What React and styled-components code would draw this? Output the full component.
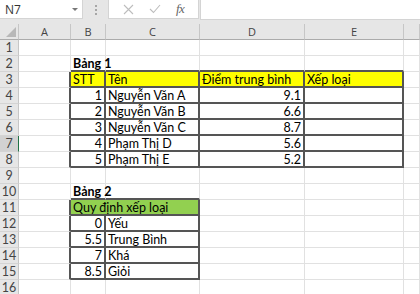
import React from 'react';
import styled, { createGlobalStyle } from 'styled-components';

const GlobalStyle = createGlobalStyle`
  html, body {
    margin: 0;
    padding: 0;
    background: #ffffff;
    overflow: hidden;
  }
  body {
    font-family: Lato, "Liberation Sans", sans-serif;
  }
`;

// last column just fills what is left of the window
const COLS = [
  { key: 'A', width: '52px' },
  { key: 'B', width: '35px' },
  { key: 'C', width: '94px' },
  { key: 'D', width: '105px' },
  { key: 'E', width: '99px' },
  { key: '', width: '1fr' },
];
const ROWS = Array.from({ length: 16 }, (_, i) => i + 1);
const ACTIVE_ROW = 7;

const cells = {
  B2: { text: 'Bảng 1', bold: true, spill: true },
  B3: { text: 'STT', fill: '#ffff00' },
  C3: { text: 'Tên', fill: '#ffff00' },
  D3: { text: 'Điểm trung bình', fill: '#ffff00' },
  E3: { text: 'Xếp loại', fill: '#ffff00' },
  B4: { text: '1', num: true }, C4: { text: 'Nguyễn Văn A' }, D4: { text: '9.1', num: true },
  B5: { text: '2', num: true }, C5: { text: 'Nguyễn Văn B' }, D5: { text: '6.6', num: true },
  B6: { text: '3', num: true }, C6: { text: 'Nguyễn Văn C' }, D6: { text: '8.7', num: true },
  B7: { text: '4', num: true }, C7: { text: 'Phạm Thị D' }, D7: { text: '5.6', num: true },
  B8: { text: '5', num: true }, C8: { text: 'Phạm Thị E' }, D8: { text: '5.2', num: true },
  B10: { text: 'Bảng 2', bold: true, spill: true },
  B11: { text: 'Quy định xếp loại', fill: '#92d050', span: 2 },
  B12: { text: '0', num: true }, C12: { text: 'Yếu' },
  B13: { text: '5.5', num: true }, C13: { text: 'Trung Bình' },
  B14: { text: '7', num: true }, C14: { text: 'Khá' },
  B15: { text: '8.5', num: true }, C15: { text: 'Giỏi' },
};

const tables = [
  { r1: 3, r2: 8, c1: 1, c2: 4 },
  { r1: 11, r2: 15, c1: 1, c2: 2 },
];
const boxed = (r, c) => tables.some(t => r >= t.r1 && r <= t.r2 && c >= t.c1 && c <= t.c2);

const TopBar = styled.div`
  display: flex;
  height: 20px;
  background: #e6e6e6;
  padding-bottom: 4px;
`;

const NameBox = styled.div`
  width: 83px;
  height: 19px;
  background: #fff;
  border-bottom: 1px solid #d4d4d4;
  border-right: 1px solid #d4d4d4;
  display: flex;
  align-items: center;
  justify-content: space-between;
  padding: 0 4px 0 5px;
  box-sizing: border-box;
  font-family: "Open Sans", "Liberation Sans", sans-serif;
  font-size: 12px;
  color: #333;
`;

const Caret = styled.span`
  width: 0;
  height: 0;
  border-left: 3px solid transparent;
  border-right: 3px solid transparent;
  border-top: 3px solid #777;
  margin-top: 1px;
`;

const Grip = styled.div`
  width: 25px;
  display: flex;
  flex-direction: column;
  align-items: center;
  justify-content: center;
  gap: 2px;
  padding-bottom: 1px;
  span {
    width: 2px;
    height: 2px;
    background: #a6a6a6;
  }
`;

const FxBox = styled.div`
  width: 91px;
  height: 19px;
  background: #fff;
  border: 1px solid #d4d4d4;
  border-top: 0;
  box-sizing: border-box;
  display: flex;
  align-items: center;
  justify-content: space-around;
  padding: 0 6px;
  margin-right: 1px;
`;

const Fx = styled.span`
  font-family: "Liberation Serif", serif;
  font-style: italic;
  font-size: 13px;
  color: #666;
  letter-spacing: -0.5px;
`;

const FormulaInput = styled.div`
  flex: 1;
  height: 19px;
  background: #fff;
  border-bottom: 1px solid #d4d4d4;
  border-left: 1px solid #d4d4d4;
`;

const Sheet = styled.div`
  display: grid;
  grid-template-columns: 19px ${COLS.map(c => c.width).join(' ')};
  grid-auto-rows: 16px;
`;

const Corner = styled.div`
  background: #e6e6e6;
  border-right: 1px solid #c6c6c6;
  border-bottom: 1px solid #ababab;
  position: relative;
  &::after {
    content: '';
    position: absolute;
    right: 2px;
    bottom: 2px;
    width: 0;
    height: 0;
    border-left: 10px solid transparent;
    border-bottom: 10px solid #b8b8b8;
  }
`;

const ColHead = styled.div`
  background: #e6e6e6;
  border-right: 1px solid #c6c6c6;
  border-bottom: 1px solid #ababab;
  display: flex;
  align-items: center;
  justify-content: center;
  font-family: "Open Sans", "Liberation Sans", sans-serif;
  font-size: 11px;
  color: #444;
  box-sizing: border-box;
`;

const RowHead = styled.div`
  background: ${p => (p.$active ? '#d2d2d2' : '#e6e6e6')};
  border-right: 1px solid ${p => (p.$active ? '#217346' : '#c6c6c6')};
  border-bottom: 1px solid #d4d4d4;
  display: flex;
  align-items: center;
  justify-content: center;
  font-size: 12.5px;
  color: #444;
  box-sizing: border-box;
`;

const Cell = styled.div`
  grid-column: span ${p => p.$span || 1};
  box-sizing: border-box;
  background: ${p => p.$fill || 'transparent'};
  border-right: ${p => (p.$darkRight ? '2px solid #555' : '1px solid #e1e1e1')};
  border-bottom: ${p => (p.$darkBottom ? '2px solid #555' : '1px solid #e1e1e1')};
  display: flex;
  align-items: center;
  justify-content: ${p => (p.$num ? 'flex-end' : 'flex-start')};
  padding: 0 2px;
  font-size: 12.5px;
  font-weight: ${p => (p.$bold ? 700 : 400)};
  color: #000;
  white-space: nowrap;
  position: ${p => (p.$spill ? 'relative' : 'static')};
  z-index: ${p => (p.$spill ? 1 : 'auto')};
`;

function renderRow(r) {
  const out = [
    <RowHead key={`h${r}`} $active={r === ACTIVE_ROW}>{r}</RowHead>,
  ];
  let skip = 0;
  COLS.forEach((col, c) => {
    if (skip > 0) {
      skip -= 1;
      return;
    }
    const data = cells[`${col.key}${r}`] || {};
    const span = data.span || 1;
    const last = c + span - 1;
    const darkRight = boxed(r, last) || boxed(r, last + 1);
    let darkBottom = false;
    for (let k = c; k <= last; k += 1) {
      if (boxed(r, k) || boxed(r + 1, k)) darkBottom = true;
    }
    skip = span - 1;
    out.push(
      <Cell
        key={`${col.key || 'F'}${r}`}
        $span={span}
        $fill={data.fill}
        $num={data.num}
        $bold={data.bold}
        $spill={data.spill}
        $darkRight={darkRight}
        $darkBottom={darkBottom}
      >
        {data.text}
      </Cell>
    );
  });
  return out;
}

export default function App() {
  return (
    <>
      <GlobalStyle />
      <TopBar>
        <NameBox>
          N7
          <Caret />
        </NameBox>
        <Grip>
          <span />
          <span />
          <span />
        </Grip>
        <FxBox>
          <svg width="11" height="11" viewBox="0 0 11 11">
            <path d="M1 1 L10 10 M10 1 L1 10" stroke="#bdbdbd" strokeWidth="1.1" fill="none" />
          </svg>
          <svg width="12" height="10" viewBox="0 0 12 10">
            <path d="M1 5 L4.5 8.5 L11 1" stroke="#bdbdbd" strokeWidth="1.1" fill="none" />
          </svg>
          <Fx>fx</Fx>
        </FxBox>
        <FormulaInput />
      </TopBar>
      <Sheet>
        <Corner />
        {COLS.map((col, i) => (
          <ColHead key={col.key || `x${i}`}>{col.key}</ColHead>
        ))}
        {ROWS.map(renderRow)}
      </Sheet>
    </>
  );
}
